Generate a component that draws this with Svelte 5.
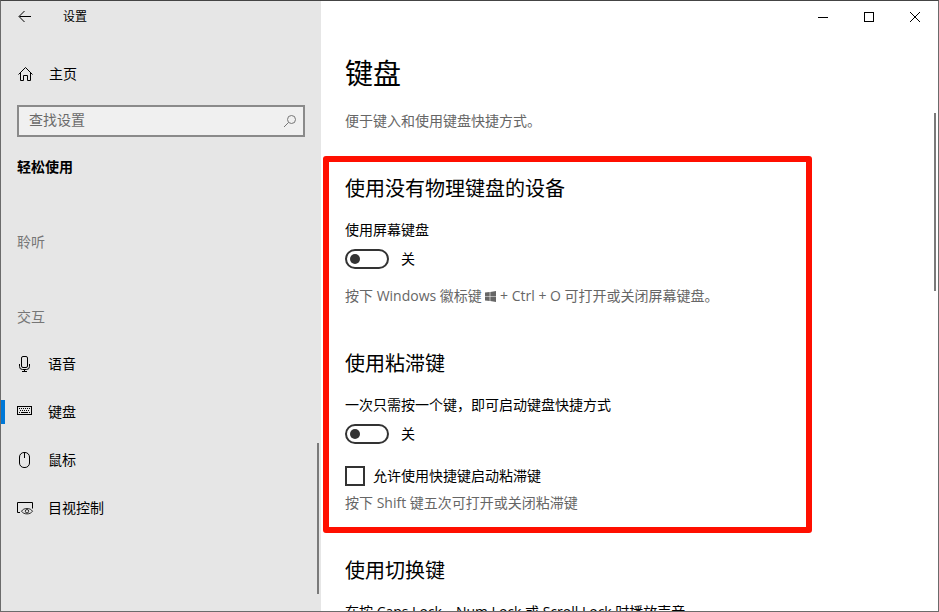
<script>
  let query = $state('');
  let current = $state('keyboard');
  let onScreen = $state(false);
  let sticky = $state(false);
  let shortcut = $state(false);

  const items = [
    { id: 'speech', label: '语音' },
    { id: 'keyboard', label: '键盘' },
    { id: 'mouse', label: '鼠标' },
    { id: 'eye', label: '目视控制' },
  ];
</script>

{#snippet icon(id)}
  <svg class="icon" viewBox="0 0 16 16" width="16" height="16" aria-hidden="true">
    {#if id === 'speech'}
      <rect x="4.5" y="0.5" width="6" height="11" rx="1.5" />
      <path d="M2.5 8v2.5a3 3 0 0 0 3 3h4a3 3 0 0 0 3-3V8M7.5 13.5v2M5 15.5h5" />
    {:else if id === 'keyboard'}
      <rect x="0.5" y="2.5" width="14" height="8" />
      <path d="M2 4.5h11" stroke-dasharray="1 1" />
      <path d="M3 6.5h10" stroke-dasharray="1 1" />
      <path d="M2 8.5h1M4 8.5h7M12 8.5h1" />
    {:else if id === 'mouse'}
      <rect x="2.5" y="0.5" width="10" height="15" rx="4.5" />
      <path d="M7.5 1v5" />
    {:else}
      <path d="M3 12.5H0.5v-10h15v6" />
      <path class="thin" d="M4.5 11.2c1.2-1.8 3-2.7 5.5-2.7s4.3.9 5.5 2.7c-1.2 1.8-3 2.7-5.5 2.7s-4.3-.9-5.5-2.7z" />
      <circle class="thin" cx="10" cy="11.2" r="1.7" />
    {/if}
  </svg>
{/snippet}

{#snippet toggleText(on)}
  <span>{on ? '开' : '关'}</span>
{/snippet}

<div class="window">
  <aside>
    <header class="titlebar">
      <button class="back" aria-label="返回">
        <svg class="icon" viewBox="0 0 14 14" width="14" height="14">
          <path d="M13 6.5H1.5M6.5 1L1 6.5 6.5 12" />
        </svg>
      </button>
      <span>设置</span>
    </header>

    <a class="home" href="#home">
      <svg class="icon" viewBox="0 0 16 16" width="16" height="16" aria-hidden="true">
        <path d="M1.5 8.5l7-7 7 7M3.5 7v7.5h3v-5h4v5h3V7" />
      </svg>
      <span>主页</span>
    </a>

    <div class="search">
      <input type="text" placeholder="查找设置" aria-label="查找设置" bind:value={query} />
      <svg class="icon" viewBox="0 0 14 14" width="14" height="14" aria-hidden="true">
        <circle cx="8.5" cy="5.5" r="4" />
        <path d="M5.5 8.5L1 13" />
      </svg>
    </div>

    <h2 class="area">轻松使用</h2>
    <h3 class="group">聆听</h3>
    <h3 class="group">交互</h3>

    <nav>
      {#each items as item}
        <a
          href="#{item.id}"
          class:active={current === item.id}
          onclick={() => (current = item.id)}
        >
          {@render icon(item.id)}
          <span>{item.label}</span>
        </a>
      {/each}
    </nav>
    <div class="thumb"></div>
  </aside>

  <main>
    <header class="controls">
      <button aria-label="最小化">
        <svg class="icon" viewBox="0 0 10 10" width="10" height="10"><path d="M0 5.5h10" /></svg>
      </button>
      <button aria-label="最大化">
        <svg class="icon" viewBox="0 0 10 10" width="10" height="10">
          <rect x="0.5" y="0.5" width="9" height="9" />
        </svg>
      </button>
      <button aria-label="关闭">
        <svg class="icon" viewBox="0 0 10 10" width="10" height="10"><path d="M0 0l10 10M10 0L0 10" /></svg>
      </button>
    </header>

    <div class="intro">
      <h1>键盘</h1>
      <p class="hint">便于键入和使用键盘快捷方式。</p>
    </div>

    <div class="highlight">
      <section>
        <h2>使用没有物理键盘的设备</h2>
        <label class="name" for="on-screen">使用屏幕键盘</label>
        <div class="switch">
          <input id="on-screen" type="checkbox" role="switch" bind:checked={onScreen} />
          {@render toggleText(onScreen)}
        </div>
        <p class="hint">
          按下 Windows 徽标键
          <svg class="logo" viewBox="0 0 11 11" width="11" height="11" role="img" aria-label="Windows">
            <path d="M0 1.6L4.7 1v4.2H0zM5.3.9L11 0v5.2H5.3zM0 5.8h4.7V10L0 9.4zM5.3 5.8H11V11l-5.7-.9z" />
          </svg>
          + Ctrl + O 可打开或关闭屏幕键盘。
        </p>
      </section>

      <section>
        <h2>使用粘滞键</h2>
        <label class="name" for="sticky">一次只需按一个键，即可启动键盘快捷方式</label>
        <div class="switch">
          <input id="sticky" type="checkbox" role="switch" bind:checked={sticky} />
          {@render toggleText(sticky)}
        </div>
        <label class="check">
          <input type="checkbox" bind:checked={shortcut} />
          <span>允许使用快捷键启动粘滞键</span>
        </label>
        <p class="hint">按下 Shift 键五次可打开或关闭粘滞键</p>
      </section>
    </div>

    <section class="next">
      <h2>使用切换键</h2>
      <p class="name">在按 Caps Lock、Num Lock 或 Scroll Lock 时播放声音</p>
    </section>
    <div class="thumb"></div>
  </main>
</div>

<style>
  :global(body) {
    margin: 0;
  }

  .window {
    display: flex;
    box-sizing: border-box;
    height: 100vh;
    overflow: hidden;
    border: 1px solid #6b6b6b;
    border-top-color: #444;
    background: #fff;
    color: #000;
    font: 14px/20px "Open Sans", "Noto Sans CJK SC", sans-serif;
  }

  h1,
  h2,
  h3,
  p {
    margin: 0;
    font-weight: 400;
  }

  button {
    display: flex;
    align-items: center;
    justify-content: center;
    padding: 0;
    border: none;
    background: none;
    color: inherit;
  }

  a {
    color: inherit;
    text-decoration: none;
  }

  .icon {
    flex: none;
    overflow: visible;
    fill: none;
    stroke: currentColor;
  }

  .thin {
    stroke-width: 0.8;
  }

  /* sidebar */
  aside {
    position: relative;
    flex: 0 0 320px;
    background: #e6e6e6;
  }

  .titlebar {
    display: flex;
    align-items: center;
    height: 32px;
    font-size: 12px;
  }

  .back {
    width: 48px;
    height: 32px;
    margin-right: 14px;
  }

  .home,
  nav a {
    display: flex;
    align-items: center;
    gap: 16px;
    height: 48px;
    padding: 0 16px;
  }

  .home {
    margin-top: 17px;
  }

  .search {
    display: flex;
    align-items: center;
    box-sizing: border-box;
    height: 32px;
    margin: 7px 16px 20px;
    padding-right: 6px;
    border: 2px solid #8a8a8a;
    background: #f0f0f0;
    color: #767676;
  }

  .search input {
    flex: 1;
    min-width: 0;
    padding: 0 10px 2px;
    border: none;
    outline: none;
    background: none;
    color: #000;
    font: inherit;
  }

  .search input::placeholder {
    color: #6a6a6a;
    opacity: 1;
  }

  .area {
    padding-left: 16px;
    font-size: 14px;
    font-weight: 700;
  }

  .group {
    margin-top: 55px;
    padding-left: 16px;
    color: #767676;
    font-size: 14px;
  }

  nav {
    margin-top: 13px;
  }

  nav a {
    gap: 15px;
  }

  /* accent bar at the window edge marks the open page */
  nav a.active::before {
    content: "";
    width: 4px;
    height: 24px;
    margin: 0 -3px 0 -16px;
    background: #0078d7;
  }

  .thumb {
    position: absolute;
    right: 2px;
    width: 2px;
    background: #7a7a7a;
  }

  aside .thumb {
    top: 442px;
    height: 151px;
  }

  main .thumb {
    top: 112px;
    height: 178px;
  }

  /* page */
  main {
    position: relative;
    flex: 1;
    min-width: 0;
  }

  .controls {
    display: flex;
    justify-content: flex-end;
    height: 32px;
  }

  .controls button {
    width: 46px;
  }

  .intro,
  .next {
    padding: 0 24px;
  }

  h1 {
    margin: 22px 0 20px;
    font-size: 28px;
    line-height: 36px;
  }

  main h2 {
    margin-bottom: 17px;
    font-size: 20px;
    line-height: 28px;
  }

  .hint {
    color: #666;
  }

  .highlight {
    box-sizing: border-box;
    max-width: 489px;
    margin: 25px 2px 24px;
    padding: 13px 16px 14px;
    border: 6px solid #ff0f00;
    border-radius: 3px;
  }

  .highlight section + section {
    margin-top: 44px;
  }

  .name {
    display: block;
  }

  .switch {
    display: flex;
    align-items: center;
    gap: 12px;
    margin: 9px 0 17px;
  }

  input[type="checkbox"] {
    box-sizing: border-box;
    flex: none;
    width: 20px;
    height: 20px;
    margin: 0;
    border: 2px solid #333;
    appearance: none;
  }

  .switch input {
    display: flex;
    align-items: center;
    width: 44px;
    padding: 0 3px;
    border-radius: 10px;
  }

  .switch input::before {
    content: "";
    width: 10px;
    height: 10px;
    border-radius: 50%;
    background: #333;
  }

  .switch input:checked {
    justify-content: flex-end;
    border-color: #0078d7;
    background: #0078d7;
  }

  .switch input:checked::before {
    background: #fff;
  }

  .check {
    display: flex;
    align-items: center;
    gap: 8px;
    margin: 22px 0 7px;
  }

  .check input:checked {
    background: #0078d7;
  }

  .logo {
    fill: currentColor;
    vertical-align: -1px;
  }
</style>
